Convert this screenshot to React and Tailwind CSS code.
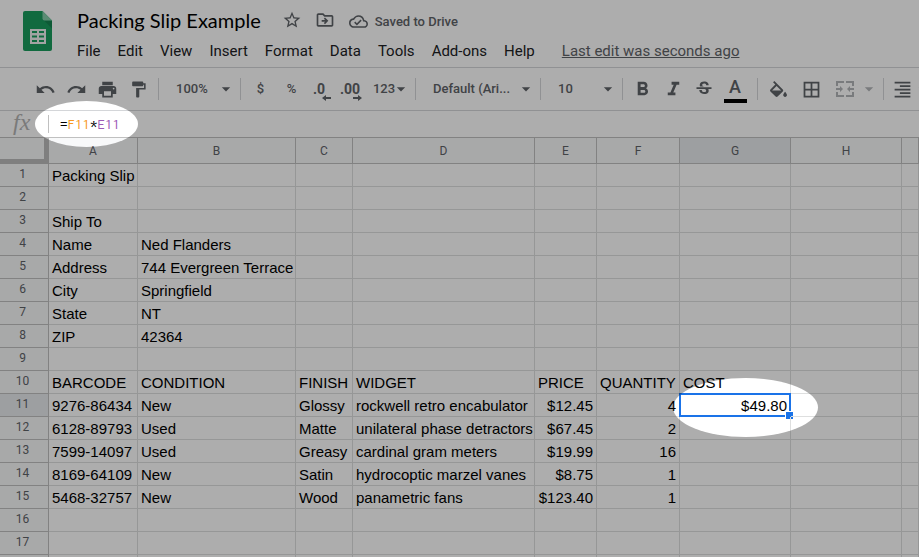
import { Fragment } from "react";
import {
  MdStarBorder,
  MdOutlineDriveFileMove,
  MdOutlineCloudDone,
  MdUndo,
  MdRedo,
  MdPrint,
  MdFormatPaint,
  MdArrowDropDown,
  MdFormatBold,
  MdFormatItalic,
  MdStrikethroughS,
  MdBorderAll,
  MdFormatAlignRight,
} from "react-icons/md";

const menus = ["File", "Edit", "View", "Insert", "Format", "Data", "Tools", "Add-ons", "Help"];

const columns = [
  { name: "A", width: "w-[89px]" },
  { name: "B", width: "w-[158px]" },
  { name: "C", width: "w-[57px]" },
  { name: "D", width: "w-[182px]" },
  { name: "E", width: "w-[62px]" },
  { name: "F", width: "w-[83px]" },
  { name: "G", width: "w-[111px]" },
  { name: "H", width: "w-[111px]" },
  { name: "", width: "" },
];

const rows = [
  ["Packing Slip"],
  [],
  ["Ship To"],
  ["Name", "Ned Flanders"],
  ["Address", "744 Evergreen Terrace"],
  ["City", "Springfield"],
  ["State", "NT"],
  ["ZIP", "42364"],
  [],
  ["BARCODE", "CONDITION", "FINISH", "WIDGET", "PRICE", "QUANTITY", "COST"],
  ["9276-86434", "New", "Glossy", "rockwell retro encabulator", "$12.45", "4", "$49.80"],
  ["6128-89793", "Used", "Matte", "unilateral phase detractors", "$67.45", "2"],
  ["7599-14097", "Used", "Greasy", "cardinal gram meters", "$19.99", "16"],
  ["8169-64109", "New", "Satin", "hydrocoptic marzel vanes", "$8.75", "1"],
  ["5468-32757", "New", "Wood", "panametric fans", "$123.40", "1"],
  [],
  [],
];

const Separator = () => <span className="h-[22px] w-px shrink-0 bg-[#d4d6d9]" />;

function Tool({ label, className = "", children }) {
  return (
    <button type="button" aria-label={label} className={`flex h-8 shrink-0 items-center justify-center ${className}`}>
      {children}
    </button>
  );
}

function Picker({ label, value, className }) {
  return (
    <label className={`flex h-8 shrink-0 items-center pr-1 ${className}`}>
      <select aria-label={label} className="h-full min-w-0 flex-1 appearance-none bg-transparent pl-[17px]">
        <option>{value}</option>
      </select>
      <MdArrowDropDown size={20} className="pointer-events-none shrink-0" />
    </label>
  );
}

function SheetsLogo() {
  return (
    <svg viewBox="0 0 29 40" className="h-10 w-[29px]" aria-hidden="true">
      <path d="M2 0h17.500l9.500 9.500V38a2 2 0 0 1-2 2H2a2 2 0 0 1-2-2V2a2 2 0 0 1 2-2z" fill="#1a9c5e" />
      <path d="M21 9.500h8v8z" fill="#158550" />
      <path d="M19.500 0l9.500 9.500h-7.500a2 2 0 0 1-2-2z" fill="#87ceac" />
      <path
        d="M7 18h16v15H7zM9 20v2h5v-2zM16 20v2h5v-2zM9 24.500v2h5v-2zM16 24.500v2h5v-2zM9 29v2h5v-2zM16 29v2h5v-2z"
        fill="#f1f1f1"
        fillRule="evenodd"
      />
    </svg>
  );
}

function Decimal({ digits, right }) {
  return (
    <span className="relative text-sm leading-5 font-bold">
      {digits}
      <svg viewBox="0 0 9 6" className={`absolute top-4 h-[6px] w-[9px] ${right ? "-right-[2px]" : "-right-[6px]"}`} aria-hidden="true">
        <path d={right ? "M0 2h5V0l4 3-4 3V4H0z" : "M9 2H4V0L0 3l4 3V4h5z"} fill="currentColor" />
      </svg>
    </span>
  );
}

function Header() {
  return (
    <header className="flex h-[68px] shrink-0 border-b border-[#d4d6d9] pl-[23px]">
      <div className="mt-[11px] w-[54px] shrink-0">
        <SheetsLogo />
      </div>
      <div className="min-w-0">
        <div className="flex h-10 items-center text-[#5f6368]">
          <h1 className="mr-[21px] font-[Lato,sans-serif] text-xl whitespace-nowrap text-black">Packing Slip Example</h1>
          <button type="button" aria-label="Star" className="mr-[13px]">
            <MdStarBorder size={20} />
          </button>
          <button type="button" aria-label="Move" className="mr-[14px]">
            <MdOutlineDriveFileMove size={20} />
          </button>
          <button type="button" className="flex items-center gap-[7px] pt-[3px] text-[13px] font-medium whitespace-nowrap">
            <MdOutlineCloudDone size={19} />
            Saved to Drive
          </button>
        </div>
        <nav className="flex h-[22px] items-center gap-[17px] text-[15px] whitespace-nowrap text-[#202124]">
          {menus.map((menu) => (
            <button type="button" key={menu}>
              {menu}
            </button>
          ))}
          <a href="#history" className="ml-[10px] text-[#5f6368] underline">
            Last edit was seconds ago
          </a>
        </nav>
      </div>
    </header>
  );
}

function Toolbar() {
  return (
    <div role="toolbar" className="flex h-[43px] shrink-0 items-center overflow-hidden border-b border-[#d4d6d9] pl-[30px] text-[13px] font-medium text-[#5f6368]">
      <Tool label="Undo" className="w-[31px]"><MdUndo size={21} /></Tool>
      <Tool label="Redo" className="w-[31px]"><MdRedo size={21} /></Tool>
      <Tool label="Print" className="w-[31px]"><MdPrint size={21} /></Tool>
      <Tool label="Paint format" className="mr-1 w-[31px]"><MdFormatPaint size={19} /></Tool>
      <Separator />
      <Picker label="Zoom" value="100%" className="w-[81px]" />
      <Separator />
      <Tool label="Format as currency" className="ml-1 w-[31px]">$</Tool>
      <Tool label="Format as percent" className="w-[31px]">%</Tool>
      <Tool label="Decrease decimal places" className="w-6"><Decimal digits=".0" /></Tool>
      <Tool label="Increase decimal places" className="w-[38px]"><Decimal digits=".00" right /></Tool>
      <Tool label="More formats" className="w-[46px]">123<MdArrowDropDown size={20} className="-ml-1" /></Tool>
      <Separator />
      <Picker label="Font" value="Default (Ari..." className="w-[124px]" />
      <Separator />
      <Picker label="Font size" value="10" className="w-[81px]" />
      <Separator />
      <Tool label="Bold" className="w-[38px]"><MdFormatBold size={23} /></Tool>
      <Tool label="Italic" className="w-6"><MdFormatItalic size={23} /></Tool>
      <Tool label="Strikethrough" className="w-[38px]"><MdStrikethroughS size={20} /></Tool>
      <Tool label="Text color" className="mr-[10px] w-6">
        <span className="flex w-[23px] flex-col items-center border-b-4 border-black text-[18px] leading-6">A</span>
      </Tool>
      <Separator />
      <Tool label="Fill color" className="w-10">
        <svg viewBox="3 0 18 17" className="h-4 w-[17px]" fill="currentColor" aria-hidden="true">
          <path d="M16.560 8.940L7.620 0 6.210 1.410l2.380 2.380-5.150 5.150c-.59.59-.59 1.540 0 2.120l5.500 5.500c.29.29.68.44 1.060.44s.77-.15 1.060-.44l5.500-5.500c.59-.58.59-1.530 0-2.120zM5.210 10L10 5.210 14.790 10H5.210zM19 11.500s-2 2.170-2 3.500c0 1.100.9 2 2 2s2-.9 2-2c0-1.330-2-3.500-2-3.500z" />
        </svg>
      </Tool>
      <Tool label="Borders" className="w-[26px]"><MdBorderAll size={21} /></Tool>
      <Tool label="Merge cells" className="w-[59px] gap-[5px] pl-2 text-[#b3b5b8]">
        <svg viewBox="0 0 18 16" className="h-4 w-[18px]" fill="currentColor" aria-hidden="true">
          <path d="M0 0h8v2H2v3H0zM10 0h8v5h-2V2h-6zM0 11h2v3h6v2H0zM16 11h2v5h-8v-2h6zM0 7h4V5l3 3-3 3V9H0zM18 7h-4V5l-3 3 3 3V9h4z" />
        </svg>
        <MdArrowDropDown size={20} />
      </Tool>
      <Separator />
      <Tool label="Horizontal align" className="ml-2"><MdFormatAlignRight size={21} /><MdArrowDropDown size={20} /></Tool>
    </div>
  );
}

function FormulaBar() {
  return (
    <div className="flex h-[27px] shrink-0 items-center border-b border-[#c0c0c0] bg-white">
      <span className="w-12 shrink-0 pb-1 pl-[13px] font-['Liberation_Serif',serif] text-2xl leading-5 text-[#b4b4b4] italic">fx</span>
      <span className="h-[18px] w-px bg-[#c0c0c0]" />
      <output aria-label="Formula" className="ml-[11px] font-[Inconsolata,'DejaVu_Sans_Mono',monospace] text-[15px] text-black">
        =<span className="text-[#f7981d]">F11</span>*<span className="text-[#9b59b6]">E11</span>
      </output>
    </div>
  );
}

function Sheet() {
  return (
    <main className="min-h-0 flex-1 overflow-hidden">
      <table className="w-full table-fixed border-separate border-spacing-0">
        <colgroup>
          <col className="w-[49px]" />
          {columns.map((column) => (
            <col key={column.name} className={column.width} />
          ))}
        </colgroup>
        <thead>
          <tr className="h-[26px] text-xs text-[#5f6368]">
            <td className="border-r-[5px] border-b-[5px] border-[#bcbcbc] bg-[#f8f9fa] p-0" />
            {columns.map((column) => (
              <th
                key={column.name}
                scope="col"
                className={`border-r border-b border-[#c0c0c0] p-0 font-normal ${column.name === "G" ? "bg-[#e8eaed]" : "bg-[#f8f9fa]"}`}
              >
                {column.name}
              </th>
            ))}
          </tr>
        </thead>
        <tbody>
          {rows.map((cells, r) => (
            <tr key={r} className="h-[23px]">
              <th
                scope="row"
                className={`border-r border-b border-[#c0c0c0] p-0 pr-[3px] pb-[2px] text-xs leading-5 font-normal text-[#5f6368] ${r === 10 ? "bg-[#e8eaed]" : "bg-[#f8f9fa]"}`}
              >
                {r + 1}
              </th>
              {columns.map((column, c) => {
                const right = r > 9 && c > 3;
                const selected = r === 10 && c === 6;
                return (
                  <td
                    key={c}
                    className={`relative border-r border-b border-[#dedfdf] p-0 px-[3px] pt-[2px] font-['Liberation_Sans',Arial,sans-serif] text-[15px] leading-5 whitespace-nowrap text-black ${right ? "text-right" : "text-left"}`}
                  >
                    {cells[c]}
                    {selected && (
                      <Fragment>
                        <span className="absolute -inset-px border-2 border-[#1a73e8]" />
                        <span className="absolute -right-[3px] -bottom-[3px] size-[8px] border-t border-l border-white bg-[#1a73e8]" />
                      </Fragment>
                    )}
                  </td>
                );
              })}
            </tr>
          ))}
          <tr className="h-[23px]">
            <td className="border-r border-[#c0c0c0] bg-[#f8f9fa] p-0" />
            {columns.map((column) => (
              <td key={column.name} className="border-r border-[#dedfdf] p-0" />
            ))}
          </tr>
        </tbody>
      </table>
    </main>
  );
}

function Spotlight() {
  return (
    <svg className="pointer-events-none absolute inset-0 size-full" aria-hidden="true">
      <mask id="spotlight">
        <rect width="100%" height="100%" fill="white" />
        <ellipse cx="86.500" cy="124" rx="51.500" ry="23" fill="black" />
        <ellipse cx="745.500" cy="407.500" rx="72.500" ry="29.500" fill="black" />
      </mask>
      <rect width="100%" height="100%" fill="black" fillOpacity="0.32" mask="url(#spotlight)" />
    </svg>
  );
}

export default function App() {
  return (
    <div className="relative flex h-screen flex-col overflow-hidden bg-white font-[Roboto,sans-serif]">
      <Header />
      <Toolbar />
      <FormulaBar />
      <Sheet />
      <Spotlight />
    </div>
  );
}
